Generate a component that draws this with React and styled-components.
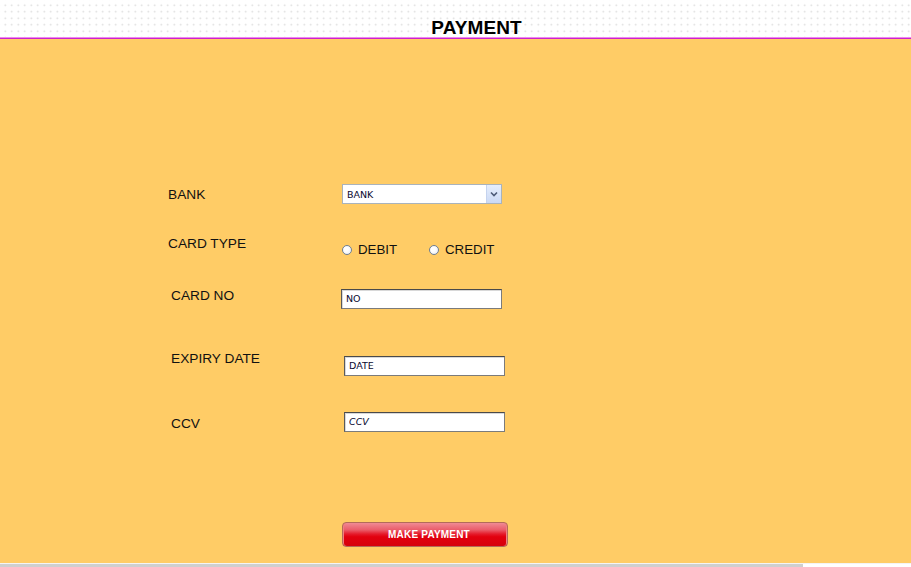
import React from "react";
import styled, { createGlobalStyle } from "styled-components";

const GlobalStyle = createGlobalStyle`
  html, body {
    margin: 0;
    padding: 0;
    background: #ffffff;
    font-family: "Liberation Sans", Arial, sans-serif;
  }
`;

const Page = styled.div`
  width: 911px;
  height: 567px;
  overflow: hidden;
  display: flex;
  flex-direction: column;
`;

const Header = styled.header`
  height: 38px;
  box-sizing: border-box;
  background-color: #ffffff;
  background-image: radial-gradient(circle, #d8d8d8 0.8px, transparent 1px);
  background-size: 6.5px 6.5px;
  background-position: 2px 2px;
  border-bottom: 1px solid #ee88ee;
  display: flex;
  align-items: flex-end;
  justify-content: center;
  padding-left: 42px;
  h1 {
    margin: 0 0 -2px 0;
    font-size: 19px;
    font-weight: bold;
    line-height: 22px;
    color: #000;
    letter-spacing: 0.1px;
  }
`;

const Rule = styled.div`
  height: 1px;
  background: #cc22cc;
`;

const Main = styled.main`
  height: 525px;
  background: #ffcc66;
  box-sizing: border-box;
  padding: 145px 0 0 168px;
  display: flex;
  flex-direction: column;
`;

const Row = styled.div`
  display: flex;
  align-items: flex-start;
  margin-top: ${(p) => p.$gap || 0}px;
`;

const Label = styled.div`
  width: ${(p) => 174 - (p.$indent || 0)}px;
  padding-left: ${(p) => p.$indent || 0}px;
  margin-top: ${(p) => (p.$top || 0) + 1}px;
  font-size: 13.7px;
  line-height: 20px;
  color: #111;
`;

const Field = styled.div`
  padding-top: ${(p) => p.$top || 0}px;
  margin-left: ${(p) => p.$shift || 0}px;
  display: flex;
  align-items: center;
`;

const SelectWrap = styled.div`
  position: relative;
  width: 160px;
  height: 20px;
`;

const Select = styled.select`
  appearance: none;
  width: 160px;
  height: 20px;
  box-sizing: border-box;
  border: 1px solid #a9b3bc;
  background: #fff;
  font-family: "DejaVu Sans", Tahoma, sans-serif;
  font-size: 9.5px;
  color: #0a0a30;
  padding: 0 0 0 4px;
  outline: none;
`;

const Arrow = styled.span`
  position: absolute;
  right: 1px;
  top: 1px;
  width: 15px;
  height: 18px;
  box-sizing: border-box;
  border-left: 1px solid #c5d3ee;
  background: linear-gradient(#e6eefc, #cbd9f5);
  pointer-events: none;
  display: flex;
  align-items: center;
  justify-content: center;
`;

const Radios = styled.div`
  display: flex;
  align-items: center;
`;

const RadioLabel = styled.label`
  display: flex;
  align-items: center;
  width: ${(p) => p.$w}px;
  font-size: 13.3px;
  line-height: 20px;
  color: #111;
  input {
    appearance: none;
    margin: 0 6px 0 0;
    width: 10px;
    height: 10px;
    border-radius: 50%;
    border: 1px solid #6d7f96;
    background: radial-gradient(circle at 40% 40%, #ffffff 30%, #e4e8ee 100%);
    box-sizing: border-box;
  }
`;

const TextInput = styled.input`
  width: ${(p) => p.$w || 161}px;
  height: 20px;
  box-sizing: border-box;
  border: 1px solid #7b7b7b;
  border-top-color: #4a4a4a;
  border-left-color: #5a5a5a;
  box-shadow: inset 1px 1px 0 #d8d8d8;
  background: #fff;
  font-family: "DejaVu Sans", Tahoma, sans-serif;
  font-size: 9.5px;
  color: #0a0a30;
  padding: 0 0 0 4px;
  font-style: ${(p) => (p.$italic ? "italic" : "normal")};
  outline: none;
  &::placeholder {
    color: #0a0a30;
    opacity: 1;
  }
`;

const PayButton = styled.button`
  width: 166px;
  height: 25px;
  margin-left: 174px;
  margin-top: 88px;
  border: 1px solid #b36a5a;
  border-radius: 4px;
  background: linear-gradient(
    #f08a94 0%,
    #ea5c6a 30%,
    #e51a2a 48%,
    #e2000e 60%,
    #d6000c 100%
  );
  box-shadow: inset 1px 0 0 #f08080, inset -1px 0 0 #f08080;
  color: #fff;
  font-family: "Liberation Sans", Arial, sans-serif;
  font-size: 10px;
  font-weight: bold;
  letter-spacing: 0.2px;
  padding: 0 0 0 8px;
  cursor: pointer;
`;

const Footer = styled.div`
  height: 3px;
  background: linear-gradient(to right, #cfcfcf 0, #cfcfcf 803px, #ffffff 803px);
  border-top: 1px solid #f4f4f4;
`;

export default function App() {
  return (
    <>
      <GlobalStyle />
      <Page>
        <Header>
          <h1>PAYMENT</h1>
        </Header>
        <Rule />
        <Main>
          <Row>
            <Label $top={0}>BANK</Label>
            <Field>
              <SelectWrap>
                <Select defaultValue="BANK">
                  <option>BANK</option>
                </Select>
                <Arrow>
                  <svg width="8" height="6" viewBox="0 0 8 6">
                    <path
                      d="M1 1.5 L4 4.5 L7 1.5"
                      fill="none"
                      stroke="#4d5b78"
                      strokeWidth="1.6"
                    />
                  </svg>
                </Arrow>
              </SelectWrap>
            </Field>
          </Row>
          <Row $gap={28}>
            <Label>CARD TYPE</Label>
            <Field $top={7}>
              <Radios>
                <RadioLabel $w={87}>
                  <input type="radio" name="type" />
                  DEBIT
                </RadioLabel>
                <RadioLabel $w={80}>
                  <input type="radio" name="type" />
                  CREDIT
                </RadioLabel>
              </Radios>
            </Field>
          </Row>
          <Row $gap={26}>
            <Label $indent={3} $top={-1}>CARD NO</Label>
            <Field $top={3} $shift={-1}>
              <TextInput placeholder="NO" />
            </Field>
          </Row>
          <Row $gap={40}>
            <Label $indent={3} $top={-1}>EXPIRY DATE</Label>
            <Field $top={7} $shift={2}>
              <TextInput placeholder="DATE" />
            </Field>
          </Row>
          <Row $gap={36}>
            <Label $indent={3} $top={1}>CCV</Label>
            <Field $shift={2}>
              <TextInput placeholder="CCV" $italic />
            </Field>
          </Row>
          <PayButton>MAKE PAYMENT</PayButton>
        </Main>
        <Footer />
      </Page>
    </>
  );
}
